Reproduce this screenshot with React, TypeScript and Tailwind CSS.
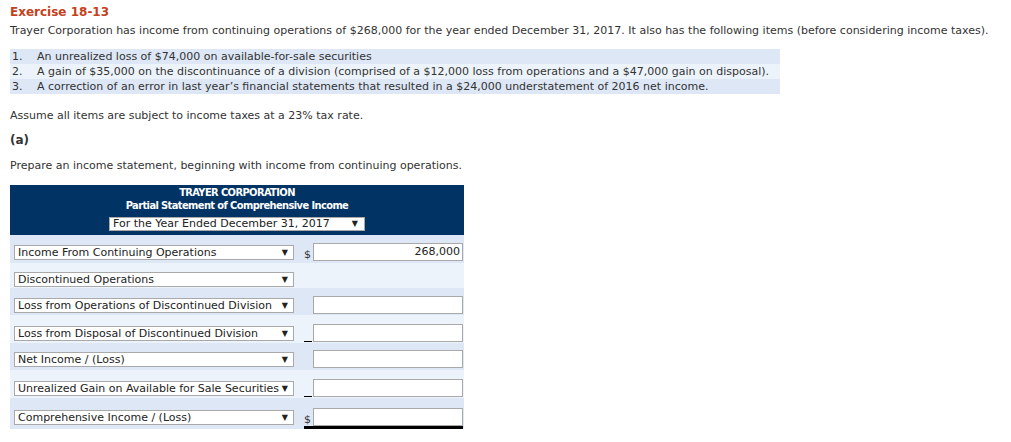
import React from "react";

const rows = [
  { label: "Income From Continuing Operations", pre: "$", value: "268,000", input: true, dark: true, pt: "pt-[10px]", h: "h-[28px]" },
  { label: "Discontinued Operations", pre: "", value: "", input: false, dark: false, pt: "pt-[9px]", h: "h-[25px]" },
  { label: "Loss from Operations of Discontinued Division", pre: "", value: "", input: true, dark: true, pt: "pt-[10px]", h: "h-[27px]" },
  { label: "Loss from Disposal of Discontinued Division", pre: "_", value: "", input: true, dark: false, pt: "pt-[11px]", h: "h-[28px]" },
  { label: "Net Income / (Loss)", pre: "", value: "", input: true, dark: true, pt: "pt-[9px]", h: "h-[27px]" },
  { label: "Unrealized Gain on Available for Sale Securities", pre: "_", value: "", input: true, dark: false, pt: "pt-[11px]", h: "h-[28px]" },
  { label: "Comprehensive Income / (Loss)", pre: "$", value: "", input: true, dark: true, pt: "pt-[12px]", h: "h-[31px]", total: true },
];

function Select({ label, w }: { label: string; w: string }) {
  return (
    <div className={`${w} h-[15px] bg-white border border-[#a9a9a9] flex items-center justify-between pl-[3px] pr-[5px] text-[11px] leading-[13px] text-[#222] whitespace-nowrap overflow-hidden`}>
      <span>{label}</span>
      <span className="text-[8px]">▼</span>
    </div>
  );
}

export default function App() {
  return (
    <div className="px-[10px] font-['DejaVu_Sans',Verdana,sans-serif] text-[11px] text-[#333] bg-white min-h-[442px]">
      <div className="pt-[4px] h-[20px] leading-[16px] text-[12px] font-bold text-[#c4411c]">Exercise 18-13</div>
      <div className="mt-[3px] leading-[15px]">
        Trayer Corporation has income from continuing operations of $268,000 for the year ended December 31, 2017. It also has the following items (before considering income taxes).
      </div>
      <div className="mt-[11px] w-[770px] leading-[15px]">
        <div className="flex bg-[#dde7f6] h-[15px]"><span className="w-[27px] pl-[2px]">1.</span><span>An unrealized loss of $74,000 on available-for-sale securities</span></div>
        <div className="flex bg-[#edf3fb] h-[15px]"><span className="w-[27px] pl-[2px]">2.</span><span>A gain of $35,000 on the discontinuance of a division (comprised of a $12,000 loss from operations and a $47,000 gain on disposal).</span></div>
        <div className="flex bg-[#dde7f6] h-[15px]"><span className="w-[27px] pl-[2px]">3.</span><span>A correction of an error in last year’s financial statements that resulted in a $24,000 understatement of 2016 net income.</span></div>
      </div>
      <div className="mt-[14px] leading-[15px]">Assume all items are subject to income taxes at a 23% tax rate.</div>
      <div className="mt-[10px] leading-[15px] font-bold text-[12px]">(a)</div>
      <div className="mt-[10px] leading-[15px]">Prepare an income statement, beginning with income from continuing operations.</div>
      <div className="mt-[12px] w-[454px]">
        <div className="bg-[#023365] h-[50px] flex flex-col items-center text-white font-bold font-['DejaVu_Sans_Condensed',sans-serif] tracking-[-0.6px] text-[11px] leading-[13px] pt-[1px]">
          <div>TRAYER CORPORATION</div>
          <div>Partial Statement of Comprehensive Income</div>
          <div className="mt-[5px] font-normal tracking-normal font-['DejaVu_Sans',sans-serif]">
            <div className="w-[256px] h-[14px] bg-white border border-[#a9a9a9] flex items-center justify-between pl-[3px] pr-[6px] text-[11px] text-[#222] leading-[12px]">
              <span>For the Year Ended December 31, 2017</span>
              <span className="text-[8px]">▼</span>
            </div>
          </div>
        </div>
        {rows.map((r, i) => (
          <div key={i} className={`${r.h} ${r.pt} flex items-start ${r.dark ? "bg-[#dde7f6]" : "bg-[#edf3fb]"}`}>
            <div className="ml-[4px]">
              <Select label={r.label} w="w-[280px]" />
            </div>
            {r.input && (
              <div className={`ml-[10px] flex items-end -mt-[2px] ${r.total ? "border-b-[3px] border-black" : ""}`}>
                {r.pre === "_" ? (
                  <span className="w-[9px] h-[18px] flex items-end"><span className="block w-[8px] border-b border-black" /></span>
                ) : (
                  <span className="w-[9px] text-[11px] leading-[12px] text-[#333]">{r.pre}</span>
                )}
                <div className="w-[150px] h-[18px] bg-white border border-[#a9a9a9] text-right pr-[2px] text-[11px] leading-[16px] text-[#222]">{r.value}</div>
              </div>
            )}
          </div>
        ))}
      </div>
    </div>
  );
}
